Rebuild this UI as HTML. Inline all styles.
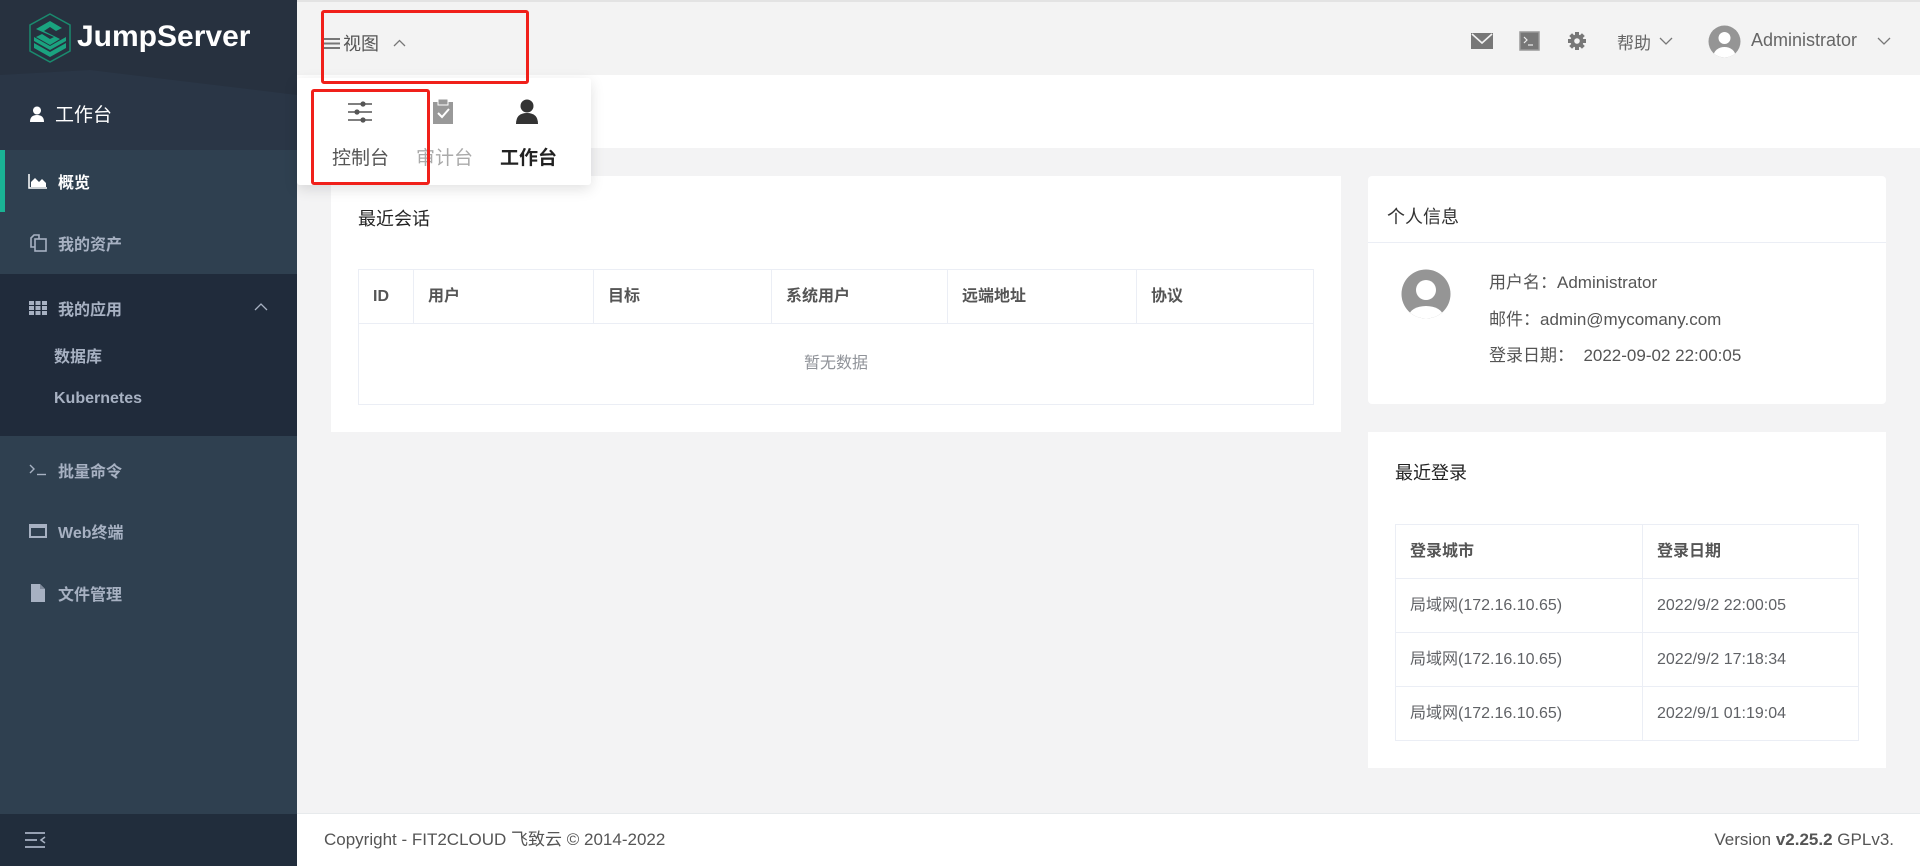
<!DOCTYPE html>
<html><head><meta charset="utf-8"><style>
*{box-sizing:border-box;margin:0;padding:0}
body{width:1920px;height:866px;overflow:hidden;background:#f3f3f4;font-family:"Liberation Sans","Noto Sans CJK SC",sans-serif;position:relative;color:#676a6c}
.abs{position:absolute}
.side{left:0;top:0;width:297px;height:866px;background:#2f4050}
.top{left:0;top:0;width:297px;height:150px;background:#27313f;overflow:hidden}
.nav{position:absolute;left:0;width:297px;color:#a7b1c2;font-size:16px;font-weight:bold;display:flex;align-items:center}
.nav .ic{width:22px;margin-left:27px;margin-right:9px;display:inline-flex;justify-content:center}
.card{background:#fff;border-radius:4px}
table{border-collapse:collapse;position:absolute;font-size:16px}
td,th{border:1px solid #ebeef5;text-align:left;padding:0 0 0 14px;color:#606266;vertical-align:middle;line-height:20px}
th{font-weight:bold;color:#555}
.red{border:3px solid #f0201a;border-radius:3px}
</style></head><body>
<div class="abs side"></div>
<div class="abs top">
 <svg width="297" height="150" class="abs" style="left:0;top:0"><polygon points="0,75 90,70 297,95 297,150 0,150" fill="#2a3646"/></svg>
 <svg class="abs" style="left:28px;top:13px" width="44" height="50" viewBox="0 0 44 50"><polygon points="22,1 42,12 42,38 22,49 2,38 2,12" fill="none" stroke="#1a8a6e" stroke-width="1.5"/><path d="M6 30 L22 39 L38 30 L38 35 L22 44 L6 35Z M6 24 L22 33 L38 24 L38 28 L22 37 L6 28Z" fill="#1aa37f"/><path d="M8 16 L22 8 L34 15 L28 18 L22 14 L16 18 L32 26 L22 32 L8 24 L14 21 L22 26 L26 24 L10 17Z" fill="#1aa37f"/></svg>
 <div class="abs" style="left:77px;top:20px;color:#fff;font-size:30px;font-weight:bold">JumpServer</div>
 <div class="abs" style="left:29px;top:100px;color:#fff;font-size:19px;display:flex;align-items:center"><svg width="16" height="16" viewBox="0 0 16 16"><circle cx="8" cy="4.5" r="4" fill="#fff"/><path d="M1 16 Q1 9 8 9 Q15 9 15 16Z" fill="#fff"/></svg><span style="margin-left:10px">工作台</span></div>
</div>
<div class="abs" style="left:0;top:150px;width:297px;height:62px;background:#2f4050"></div>
<div class="abs" style="left:0;top:150px;width:5px;height:62px;background:#1ab394"></div>
<div class="nav" style="top:150px;height:62px;color:#fff"><span class="ic"><svg width="20" height="16"><path d="M1 1V15H19" stroke="#fff" stroke-width="1.5" fill="none"/><path d="M3 14 L3 9 L7 5 L11 9 L14 6 L18 10 L18 14Z" fill="#fff"/></svg></span>概览</div>
<div class="nav" style="top:212px;height:62px"><span class="ic"><svg width="18" height="18"><rect x="6" y="5" width="11" height="12" fill="none" stroke="#a7b1c2" stroke-width="1.6"/><path d="M6 13H2V4L5 1H10V5" fill="none" stroke="#a7b1c2" stroke-width="1.6"/></svg></span>我的资产</div>
<div class="abs" style="left:0;top:274px;width:297px;height:162px;background:#202b3b"></div>
<div class="nav" style="top:282px;height:52px"><span class="ic"><svg width="18" height="14"><g fill="#a7b1c2"><rect x="0" y="0" width="5" height="4"/><rect x="6.5" y="0" width="5" height="4"/><rect x="13" y="0" width="5" height="4"/><rect x="0" y="5" width="5" height="4"/><rect x="6.5" y="5" width="5" height="4"/><rect x="13" y="5" width="5" height="4"/><rect x="0" y="10" width="5" height="4"/><rect x="6.5" y="10" width="5" height="4"/><rect x="13" y="10" width="5" height="4"/></g></svg></span>我的应用<svg class="abs" style="left:254px;top:20px" width="14" height="9"><path d="M1 8 L7 2 L13 8" stroke="#a7b1c2" fill="none" stroke-width="1.3"/></svg></div>
<div class="nav" style="top:340px;height:30px;padding-left:54px">数据库</div>
<div class="nav" style="top:384px;height:30px;padding-left:54px">Kubernetes</div>
<div class="nav" style="top:440px;height:60px"><span class="ic"><svg width="18" height="12"><path d="M1 1 L5 5 L1 9" stroke="#a7b1c2" fill="none" stroke-width="1.4"/><path d="M8 10.5H17" stroke="#a7b1c2" stroke-width="1.4"/></svg></span>批量命令</div>
<div class="nav" style="top:501px;height:60px"><span class="ic"><svg width="18" height="14"><rect x="1" y="1" width="16" height="12" fill="none" stroke="#a7b1c2" stroke-width="2"/><rect x="1" y="1" width="16" height="3" fill="#a7b1c2"/></svg></span>Web终端</div>
<div class="nav" style="top:563px;height:60px"><span class="ic"><svg width="14" height="18"><path d="M0 0H9L14 5V18H0Z" fill="#a7b1c2"/><path d="M9 0V5H14" fill="#7f8a9b"/></svg></span>文件管理</div>
<div class="abs" style="left:0;top:814px;width:297px;height:52px;background:#212d3c"></div>
<svg class="abs" style="left:25px;top:831px" width="22" height="18"><g stroke="#a7b1c2" stroke-width="1.8"><path d="M0 2H20M0 9H12M0 16H20"/></g><path d="M20 6 L16 9 L20 12" stroke="#a7b1c2" fill="none" stroke-width="1.5"/></svg>

<!-- header -->
<div class="abs" style="left:297px;top:0;width:1623px;height:75px;background:#f3f3f3;border-top:2px solid #e3e3e3"></div>
<div class="abs" style="left:297px;top:75px;width:1623px;height:73px;background:#fff"></div>
<div class="abs" style="left:324px;top:30px;font-size:18px;color:#555;display:flex;align-items:center"><svg width="16" height="13"><g stroke="#777" stroke-width="2"><path d="M0 2H16M0 6.5H16M0 11H16"/></g></svg><span style="margin-left:3px">视图</span><svg style="margin-left:14px" width="13" height="8"><path d="M1 7 L6.5 1.5 L12 7" stroke="#777" fill="none" stroke-width="1.3"/></svg></div>
<svg class="abs" style="left:1471px;top:33px" width="22" height="16"><rect width="22" height="16" fill="#777"/><path d="M1 1 L11 10 L21 1" stroke="#f3f3f3" stroke-width="1.6" fill="none"/></svg>
<svg class="abs" style="left:1519px;top:31px" width="21" height="20"><rect x="1" y="1" width="19" height="18" fill="#777" stroke="#999" stroke-width="1.5"/><path d="M5 6 L8 9 L5 12" stroke="#eee" fill="none" stroke-width="1.2"/><path d="M9 14H14" stroke="#eee" stroke-width="1.2"/></svg>
<svg class="abs" style="left:1568px;top:32px" width="18" height="18" viewBox="0 0 18 18"><g fill="#777"><circle cx="9" cy="9" r="6.5"/><rect x="7" y="0" width="4" height="18"/><rect x="0" y="7" width="18" height="4"/><rect x="7" y="0" width="4" height="18" transform="rotate(45 9 9)"/><rect x="7" y="0" width="4" height="18" transform="rotate(-45 9 9)"/></g><circle cx="9" cy="9" r="2.8" fill="#f3f3f3"/></svg>
<div class="abs" style="left:1617px;top:29px;font-size:17px;color:#666">帮助</div>
<svg class="abs" style="left:1659px;top:37px" width="14" height="8"><path d="M1 1 L7 7 L13 1" stroke="#777" fill="none" stroke-width="1.3"/></svg>
<svg class="abs" style="left:1708px;top:25px" width="33" height="33" viewBox="0 0 33 33"><defs><clipPath id="c1"><circle cx="16.5" cy="16.5" r="16"/></clipPath></defs><circle cx="16.5" cy="16.5" r="16" fill="#959595"/><g clip-path="url(#c1)"><circle cx="16.5" cy="13" r="6" fill="#fff"/><ellipse cx="16.5" cy="31" rx="11" ry="9" fill="#fff"/></g></svg>
<div class="abs" style="left:1751px;top:30px;font-size:18px;color:#666">Administrator</div>
<svg class="abs" style="left:1877px;top:37px" width="14" height="8"><path d="M1 1 L7 7 L13 1" stroke="#777" fill="none" stroke-width="1.3"/></svg>

<!-- left card -->
<div class="abs card" style="left:331px;top:176px;width:1010px;height:256px;border-radius:0"></div>
<div class="abs" style="left:358px;top:205px;font-size:18px;color:#222">最近会话</div>
<table style="left:358px;top:269px;width:956px">
<tr style="height:54px"><th style="width:55px">ID</th><th style="width:180px">用户</th><th style="width:178px">目标</th><th style="width:176px">系统用户</th><th style="width:189px">远端地址</th><th>协议</th></tr>
<tr style="height:81px"><td colspan="6" style="text-align:center;padding:0;color:#909399">暂无数据</td></tr>
</table>

<!-- right card 1 -->
<div class="abs card" style="left:1368px;top:176px;width:518px;height:228px"></div>
<div class="abs" style="left:1387px;top:203px;font-size:18px;color:#333">个人信息</div>
<div class="abs" style="left:1368px;top:242px;width:518px;height:1px;background:#ebeef5"></div>
<svg class="abs" style="left:1401px;top:269px" width="50" height="50" viewBox="0 0 50 50"><defs><clipPath id="c2"><circle cx="25" cy="25" r="24.5"/></clipPath></defs><circle cx="25" cy="25" r="24.5" fill="#959595"/><g clip-path="url(#c2)"><circle cx="25" cy="21" r="10" fill="#fff"/><ellipse cx="25" cy="47" rx="17" ry="10" fill="#fff"/></g></svg>
<div class="abs" style="left:1489px;top:265px;font-size:17px;color:#555;line-height:36.5px">用户名：Administrator<br>邮件：admin@mycomany.com<br>登录日期：&nbsp; 2022-09-02 22:00:05</div>

<!-- right card 2 -->
<div class="abs card" style="left:1368px;top:432px;width:518px;height:336px;border-radius:0"></div>
<div class="abs" style="left:1395px;top:459px;font-size:18px;color:#222">最近登录</div>
<table style="left:1395px;top:524px;width:464px">
<tr style="height:54px"><th style="width:247px">登录城市</th><th>登录日期</th></tr>
<tr style="height:54px"><td>局域网(172.16.10.65)</td><td>2022/9/2 22:00:05</td></tr>
<tr style="height:54px"><td>局域网(172.16.10.65)</td><td>2022/9/2 17:18:34</td></tr>
<tr style="height:54px"><td>局域网(172.16.10.65)</td><td>2022/9/1 01:19:04</td></tr>
</table>

<!-- dropdown -->
<div class="abs" style="left:297px;top:78px;width:294px;height:107px;background:#fff;box-shadow:0 4px 14px rgba(0,0,0,0.12);border-radius:3px"></div>
<svg class="abs" style="left:348px;top:101px" width="24" height="22"><g stroke="#555" stroke-width="1.6"><path d="M0 3H24M0 11H24M0 19H24"/></g><g fill="#555"><circle cx="15" cy="3" r="2.6"/><circle cx="9" cy="11" r="2.6"/><circle cx="15" cy="19" r="2.6"/></g></svg>
<svg class="abs" style="left:433px;top:99px" width="20" height="25"><rect x="0" y="3" width="20" height="22" fill="#999"/><rect x="5" y="0" width="10" height="6" fill="#999" stroke="#fff" stroke-width="1"/><path d="M5 14 L9 18 L16 10" stroke="#fff" fill="none" stroke-width="2"/></svg>
<svg class="abs" style="left:516px;top:99px" width="22" height="25"><circle cx="11" cy="7" r="6.5" fill="#333"/><path d="M0 25 Q0 14 11 14 Q22 14 22 25Z" fill="#333"/></svg>
<div class="abs" style="left:332px;top:143px;font-size:19px;color:#555">控制台</div>
<div class="abs" style="left:416px;top:143px;font-size:19px;color:#aaa">审计台</div>
<div class="abs" style="left:500px;top:143px;font-size:19px;color:#222;font-weight:bold">工作台</div>

<div class="abs red" style="left:321px;top:10px;width:208px;height:74px"></div>
<div class="abs red" style="left:311px;top:89px;width:119px;height:96px"></div>

<!-- footer -->
<div class="abs" style="left:297px;top:813px;width:1623px;height:53px;background:#fff;border-top:1px solid #e7eaec"></div>
<div class="abs" style="left:324px;top:830px;font-size:17px;color:#555;line-height:20px">Copyright - FIT2CLOUD 飞致云 © 2014-2022</div>
<div class="abs" style="right:26px;top:830px;font-size:17px;color:#555;line-height:20px">Version <b>v2.25.2</b> GPLv3.</div>
</body></html>
